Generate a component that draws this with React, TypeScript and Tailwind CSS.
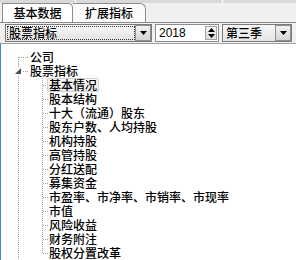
import React from 'react';

const font = { fontFamily: '"Noto Sans CJK SC", "Noto Sans", sans-serif' };

type Node = { label: string; level: 0 | 1; last?: boolean; expander?: boolean; selected?: boolean; first?: boolean };

const nodes: Node[] = [
  { label: '公司', level: 0, first: true },
  { label: '股票指标', level: 0, expander: true },
  { label: '基本情况', level: 1, selected: true },
  { label: '股本结构', level: 1 },
  { label: '十大（流通）股东', level: 1 },
  { label: '股东户数、人均持股', level: 1 },
  { label: '机构持股', level: 1 },
  { label: '高管持股', level: 1 },
  { label: '分红送配', level: 1 },
  { label: '募集资金', level: 1 },
  { label: '市盈率、市净率、市销率、市现率', level: 1 },
  { label: '市值', level: 1 },
  { label: '风险收益', level: 1 },
  { label: '财务附注', level: 1 },
  { label: '股权分置改革', level: 1, last: true },
];

function DropButton() {
  return (
    <div className="w-[16px] h-[16px] border border-[#8e8f8f] bg-gradient-to-b from-[#f2f2f2] to-[#d5d5d5] flex items-center justify-center">
      <svg width="7" height="4" viewBox="0 0 7 4">
        <polygon points="0,0 7,0 3.5,4" fill="#000" />
      </svg>
    </div>
  );
}

function Gutter({ n }: { n: Node }) {
  const dot = { stroke: '#a0a0a0', strokeWidth: 1, strokeDasharray: '1 1' };
  const w = n.level === 0 ? 29 : 48;
  return (
    <svg width={w} height="14" className="shrink-0">
      {/* root vertical */}
      <line x1="17.5" y1={n.first ? 7 : 0} x2="17.5" y2="14" {...dot} />
      {n.level === 0 && !n.expander && <line x1="18" y1="7.5" x2="28" y2="7.5" {...dot} />}
      {n.expander && (
        <>
          <rect x="14" y="3" width="8" height="8" fill="#fff" />
          <polygon points="20,4 20,10 14,10" fill="#4a4a4a" />
          <line x1="22" y1="7.5" x2="28" y2="7.5" {...dot} />
        </>
      )}
      {n.level === 1 && (
        <>
          <line x1="41.5" y1="0" x2="41.5" y2={n.last ? 7 : 14} {...dot} />
          <line x1="42" y1="7.5" x2="47" y2="7.5" {...dot} />
        </>
      )}
    </svg>
  );
}

export default function App() {
  return (
    <div className="w-[296px] h-[260px] bg-[#f0f0f0] overflow-hidden flex flex-col text-[12px] font-medium text-black" style={font}>
      {/* top strip */}
      <div className="h-[3px] bg-[#d9d9d9] flex">
        <div className="w-[75px]" />
        <div className="w-px bg-white" />
        <div className="w-[146px]" />
        <div className="w-px bg-white" />
      </div>

      {/* tabs */}
      <div className="h-[20px] flex items-end pl-[2px] border-b border-[#8c8c8c]">
        <div className="w-[71px] h-[19px] bg-white border border-b-0 border-[#8c8c8c] rounded-tr-[5px] flex items-center justify-center leading-[14px]">
          基本数据
        </div>
        <div className="w-[73px] h-[19px] bg-[#fafafa] border border-b-0 border-l-0 border-[#8c8c8c] rounded-tr-[6px] flex items-center justify-center leading-[14px]">
          扩展指标
        </div>
      </div>

      {/* selectors */}
      <div className="h-[21px] flex items-center pl-[5px] gap-[3px]">
        <div className="w-[147px] h-[18px] border border-[#7a7a7a] bg-gradient-to-b from-[#f8f8f8] to-[#e3e3e3] flex items-center pl-[1px]">
          <div className="flex-1 h-[14px] border border-dotted border-[#333] flex items-center pl-[1px] leading-[12px]">股票指标</div>
          <DropButton />
        </div>
        <div className="w-[64px] h-[18px] border border-[#8c8c8c] bg-white flex items-center pl-[3px]">
          <span className="flex-1 leading-[14px] font-normal" style={{ fontFamily: '"Liberation Sans", sans-serif' }}>2018</span>
          <div className="w-[12px] h-[14px] mr-[1px] bg-gradient-to-b from-[#f4f4f4] to-[#dcdcdc] border border-[#a5a5a5] flex flex-col items-center justify-center gap-[2px]">
            <svg width="7" height="4" viewBox="0 0 7 4"><polygon points="0,4 7,4 3.5,0" fill="#000" /></svg>
            <svg width="7" height="4" viewBox="0 0 7 4"><polygon points="0,0 7,0 3.5,4" fill="#000" /></svg>
          </div>
        </div>
        <div className="w-[70px] h-[18px] border border-[#7a7a7a] bg-gradient-to-b from-[#f8f8f8] to-[#e3e3e3] flex items-center pl-[3px]">
          <span className="flex-1 leading-[14px]">第三季</span>
          <DropButton />
        </div>
      </div>

      {/* tree */}
      <div className="flex-1 bg-white border-t border-[#a0a0a0] border-l border-l-dotted border-l-[#3c8cdc] pt-[6px] flex flex-col">
        {nodes.map((n) => (
          <div key={n.label} className="h-[14px] flex items-center whitespace-nowrap">
            <Gutter n={n} />
            {n.selected ? (
              <span className="-ml-[2px] px-[1px] h-[14px] flex items-center leading-[12px] rounded-[2px] border border-[#d0d0d0] bg-gradient-to-b from-[#fafafa] to-[#ececec]">
                {n.label}
              </span>
            ) : (
              <span className="leading-[14px]">{n.label}</span>
            )}
          </div>
        ))}
      </div>
    </div>
  );
}
